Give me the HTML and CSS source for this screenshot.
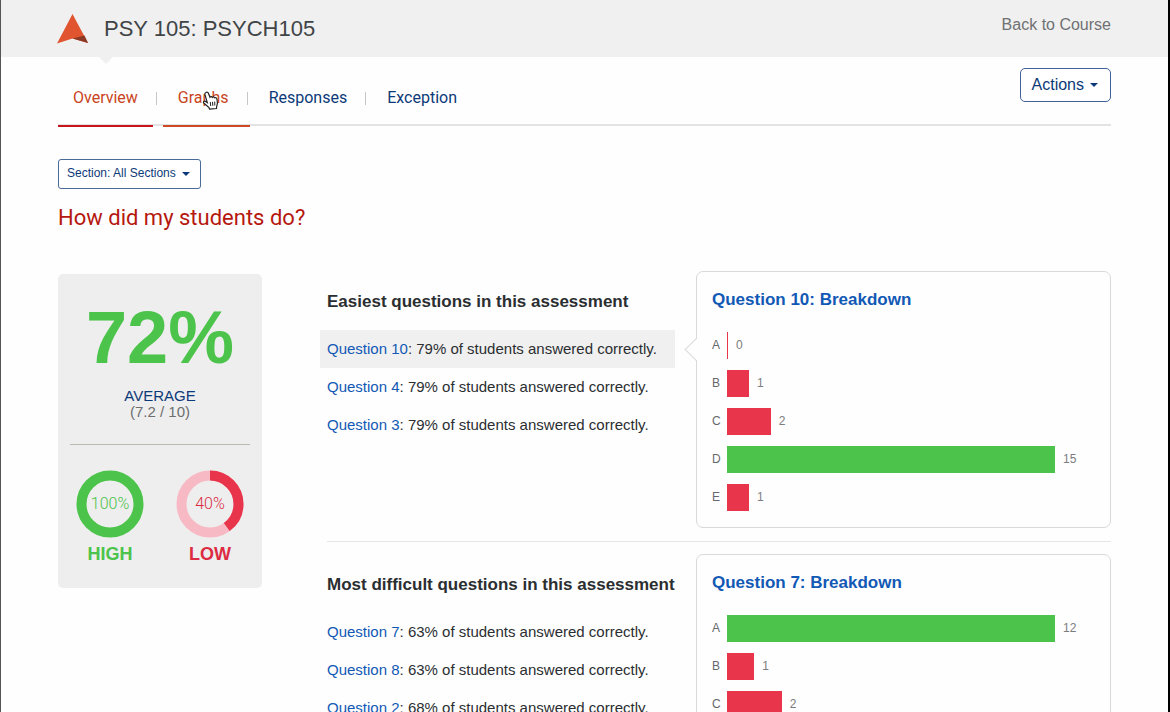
FILE: index.html
```html
<!DOCTYPE html>
<html lang="en">
<head>
  <meta charset="UTF-8" />
  <meta name="viewport" content="width=device-width, initial-scale=1.0" />
  <title>PSY 105: PSYCH105</title>
  <link rel="stylesheet" href="styles.css">
</head>
<body>
  <header class="top-bar">
    <svg class="logo" viewBox="0 0 31 30" width="31" height="30" aria-hidden="true">
      <path d="M15.500 0 L31 29 L15.500 24.500 L0 29.500 Z" fill="#e0552f"/>
      <path d="M15.500 24.500 L27.500 21.500 L31 29 Z" fill="#8c3a26"/>
    </svg>
    <h1>PSY 105: PSYCH105</h1>
    <a href="#" class="back-link">Back to Course</a>
  </header>

  <main>
    <div class="nav-row">
      <nav class="tabs">
        <a href="#" class="tab active">Overview</a>
        <a href="#" class="tab hovered">Graphs
          <svg class="cursor" viewBox="0 0 17 19" width="17" height="19" aria-hidden="true">
            <path d="M4 1.500 C5 .8 6 1.300 6.400 2.300 L8 6.200 C8.600 5.400 9.900 5.400 10.300 6.400 C11 5.700 12.200 5.900 12.600 6.800 C13.600 6.300 14.700 6.800 14.900 8 L15.400 11.500 C15.600 13.200 14.800 14.300 14.600 16 L14.500 17.500 L7.500 18.200 L7 16.500 L2 12.300 C.8 11.200 1.800 9.700 3.200 10.300 L5.300 11.600 L2.900 3.400 C2.700 2.600 3 1.900 4 1.500 Z" fill="#fff" stroke="#222" stroke-width="1.200"/>
            <path d="M8.300 11 L8.700 15 M10.500 10.800 L10.800 14.800 M12.700 10.600 L12.800 14.500" stroke="#222" stroke-width="1" fill="none"/>
          </svg>
        </a>
        <a href="#" class="tab">Responses</a>
        <a href="#" class="tab">Exception</a>
      </nav>
      <button class="actions-btn">Actions <span class="caret"></span></button>
    </div>

    <div class="section-select">
      <select aria-label="Section">
        <option>Section: All Sections</option>
      </select>
      <span class="caret"></span>
    </div>

    <h2>How did my students do?</h2>

    <div class="results">
      <aside class="stats">
        <div class="score">72%</div>
        <div class="average">AVERAGE</div>
        <div class="points">(7.2 / 10)</div>
        <div class="range">
          <div class="high">
            <svg viewBox="0 0 68 68" width="68" height="68">
              <circle cx="34" cy="34" r="28.500" fill="none" stroke="#4cc34a" stroke-width="10"/>
              <text x="34" y="39" text-anchor="middle">100%</text>
            </svg>
            HIGH
          </div>
          <div class="low">
            <svg viewBox="0 0 68 68" width="68" height="68">
              <circle cx="34" cy="34" r="28.500" fill="none" stroke="#f7bac4" stroke-width="10"/>
              <circle cx="34" cy="34" r="28.500" fill="none" stroke="#e8354b" stroke-width="10" pathLength="100" stroke-dasharray="40 60" transform="rotate(-90 34 34)"/>
              <text x="34" y="39" text-anchor="middle">40%</text>
            </svg>
            LOW
          </div>
        </div>
      </aside>

      <div class="questions">
        <section class="question-group">
          <div class="question-list">
            <h3>Easiest questions in this assessment</h3>
            <ul>
              <li class="selected"><a href="#">Question 10</a>: 79% of students answered correctly.</li>
              <li><a href="#">Question 4</a>: 79% of students answered correctly.</li>
              <li><a href="#">Question 3</a>: 79% of students answered correctly.</li>
            </ul>
          </div>
          <div class="breakdown pointed">
            <h3>Question 10: Breakdown</h3>
            <div class="row"><span class="letter">A</span><div class="track"><div class="bar" style="width: 0%"></div><span class="count">0</span></div></div>
            <div class="row"><span class="letter">B</span><div class="track"><div class="bar" style="width: 6.67%"></div><span class="count">1</span></div></div>
            <div class="row"><span class="letter">C</span><div class="track"><div class="bar" style="width: 13.33%"></div><span class="count">2</span></div></div>
            <div class="row"><span class="letter">D</span><div class="track"><div class="bar correct" style="width: 100%"></div><span class="count">15</span></div></div>
            <div class="row"><span class="letter">E</span><div class="track"><div class="bar" style="width: 6.67%"></div><span class="count">1</span></div></div>
          </div>
        </section>

        <section class="question-group">
          <div class="question-list">
            <h3>Most difficult questions in this assessment</h3>
            <ul>
              <li><a href="#">Question 7</a>: 63% of students answered correctly.</li>
              <li><a href="#">Question 8</a>: 63% of students answered correctly.</li>
              <li><a href="#">Question 2</a>: 68% of students answered correctly.</li>
            </ul>
          </div>
          <div class="breakdown">
            <h3>Question 7: Breakdown</h3>
            <div class="row"><span class="letter">A</span><div class="track"><div class="bar correct" style="width: 100%"></div><span class="count">12</span></div></div>
            <div class="row"><span class="letter">B</span><div class="track"><div class="bar" style="width: 8.33%"></div><span class="count">1</span></div></div>
            <div class="row"><span class="letter">C</span><div class="track"><div class="bar" style="width: 16.67%"></div><span class="count">2</span></div></div>
          </div>
        </section>
      </div>
    </div>
  </main>
</body>
</html>
```

FILE: styles.css
```css
:root {
  --navy: #0c3a78;
  --link: #1259b5;
  --green: #4cc34a;
  --red: #e8354b;
  --orange: #c9441d;
  --text: #2b2e31;
  --line: #d9d9dc;
}
* {
  box-sizing: border-box;
}
body {
  margin: 0;
  min-height: 100vh;
  background: #fefefe;
  border-left: 1px solid #555;
  border-right: 2px solid #000;
  color: var(--text);
  font-family: "Liberation Sans", Arial, sans-serif;
}
a {
  text-decoration: none;
}
h1, h2, h3, ul {
  margin: 0;
  padding: 0;
  font-weight: normal;
}
.top-bar {
  position: relative;
  display: flex;
  align-items: center;
  height: 57px;
  padding: 0 57px 0 56px;
  background: #f0f0f0;
}
/* small notch under the header */
.top-bar::after {
  content: "";
  position: absolute;
  left: 98px;
  top: 57px;
  border: 7px solid transparent;
  border-top-color: #f0f0f0;
  border-bottom: 0;
}
.top-bar h1 {
  flex: 1;
  margin-left: 16px;
  font-size: 22px;
  color: #404447;
}
.back-link {
  padding-bottom: 8px;
  font-size: 16px;
  color: #6f7173;
}
main {
  padding: 0 57px;
}
.nav-row {
  display: flex;
  justify-content: space-between;
  align-items: flex-start;
  height: 69px;
  border-bottom: 2px solid #e3e3e3;
}
.tabs {
  display: flex;
  gap: 10px;
  font-family: Roboto, sans-serif;
  font-size: 16px;
  line-height: 20px;
}
.tab {
  position: relative;
  height: 70px;
  padding: 31px 15px 0;
  color: var(--navy);
}
.tab.active, .tab.hovered {
  color: var(--orange);
  border-bottom: 2px solid #c8151b;
}
.tab.hovered {
  padding-right: 21px;
  margin-right: -6px;
  border-bottom-color: #cc4a26;
}
.tab + .tab::before {
  content: "";
  position: absolute;
  left: -7px;
  top: 35px;
  width: 1px;
  height: 13px;
  background: #c4c6c8;
}
.cursor {
  position: absolute;
  left: 39px;
  top: 34px;
}
.caret {
  border: 4px solid transparent;
  border-top-color: currentColor;
  border-bottom: 0;
}
.actions-btn {
  display: flex;
  align-items: center;
  gap: 6px;
  height: 34px;
  margin-top: 11px;
  padding: 0 12px 0 11px;
  border: 1px solid #3f629a;
  border-radius: 5px;
  background: #fff;
  color: var(--navy);
  font-family: inherit;
  font-size: 16px;
}
.section-select {
  position: relative;
  display: inline-block;
  margin-top: 33px;
  color: var(--navy);
}
.section-select select {
  display: block;
  width: 143px;
  height: 30px;
  padding: 0 8px 3px;
  appearance: none;
  border: 1px solid #4a6a9a;
  border-radius: 3px;
  background: #fff;
  color: inherit;
  font-family: inherit;
  font-size: 12px;
}
.section-select .caret {
  position: absolute;
  right: 11px;
  top: 13px;
  pointer-events: none;
}
h2 {
  margin-top: 14px;
  font-family: Roboto, sans-serif;
  font-size: 22px;
  line-height: 30px;
  color: #b5180f;
}
.results {
  display: flex;
  align-items: flex-start;
  margin-top: 38px;
}
.stats {
  width: 204px;
  flex-shrink: 0;
  margin-top: 3px;
  padding: 26px 12px 24px;
  border-radius: 5px;
  background: #eee;
  text-align: center;
}
.score {
  font-size: 74px;
  line-height: 76px;
  font-weight: bold;
  color: var(--green);
}
.average, .points {
  font-size: 15px;
  line-height: 16px;
}
.average {
  margin-top: 12px;
  color: var(--navy);
}
.points {
  color: #6c6e70;
}
.range {
  display: flex;
  justify-content: space-between;
  margin-top: 24px;
  padding: 25px 6px 0;
  border-top: 1px solid #b9bbae;
  font-size: 18px;
  line-height: 20px;
  font-weight: bold;
}
.range svg {
  display: block;
  margin-bottom: 6px;
}
.range text {
  font-family: Roboto, sans-serif;
  font-size: 16px;
  font-weight: 300;
  fill: currentColor;
}
.high {
  color: var(--green);
}
.low {
  color: #dc2b42;
}
.questions {
  flex: 1;
  min-width: 0;
  margin-left: 65px;
}
.question-group {
  display: grid;
  grid-template-columns: minmax(0, 348fr) minmax(0, 415fr);
  gap: 21px;
  align-items: start;
}
.question-group + .question-group {
  margin-top: 13px;
  padding-top: 12px;
  border-top: 1px solid #e6e6e8;
}
h3 {
  font-size: 17px;
  line-height: 20px;
  font-weight: bold;
  white-space: nowrap;
}
.question-list {
  padding-top: 21px;
}
.question-list ul {
  margin: 18px 0 0 -7px;
  list-style: none;
  font-size: 15px;
  line-height: 38px;
}
.question-list li {
  padding-left: 7px;
  white-space: nowrap;
}
.question-list li.selected {
  background: #f0f0f0;
}
.question-list a {
  color: var(--link);
}
.breakdown {
  position: relative;
  padding: 18px 15px 11px;
  border: 1px solid var(--line);
  border-radius: 7px;
}
.breakdown h3 {
  margin-bottom: 16px;
  color: var(--link);
}
.breakdown.pointed::before {
  content: "";
  position: absolute;
  left: -9px;
  top: 69px;
  width: 16px;
  height: 16px;
  border: 1px solid var(--line);
  border-width: 0 0 1px 1px;
  background: linear-gradient(45deg, #fefefe 50%, transparent 50%);
  transform: rotate(45deg);
}
.row {
  display: flex;
  align-items: center;
  height: 38px;
  font-size: 12px;
  color: #65686b;
}
.letter {
  width: 15px;
}
.track {
  flex: 1;
  display: flex;
  align-items: center;
  padding-right: 40px;
}
.bar {
  flex-shrink: 0;
  min-width: 1px;
  height: 27px;
  background: var(--red);
}
.bar.correct {
  background: var(--green);
}
.count {
  margin-left: 8px;
  color: #7b7d80;
}
```
